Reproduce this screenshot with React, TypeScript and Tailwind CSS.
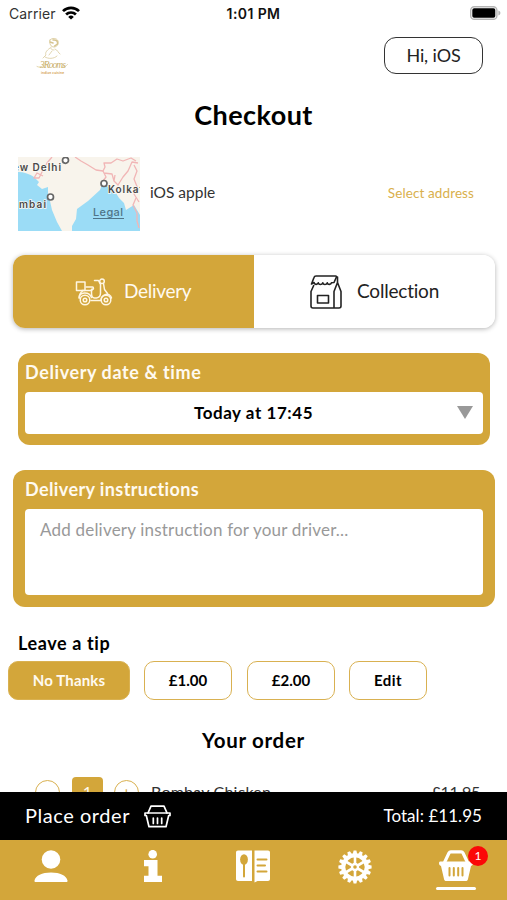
import type { ReactNode } from "react";

function WifiIcon() {
  return (
    <svg className="block h-[14px] w-[18px]" viewBox="0 0 18 14" fill="none" stroke="#000" strokeWidth="2.7">
      <path d="M1 5.1a11.4 11.4 0 0 1 16 0" />
      <path d="M4.1 8.5a7 7 0 0 1 9.8 0" />
      <path d="M9 13.6 6.2 10.9a4 4 0 0 1 5.6 0Z" fill="#000" stroke="none" />
    </svg>
  );
}

function BatteryIcon() {
  return (
    <svg className="block h-[14px] w-[31px]" viewBox="0 0 31 14">
      <rect x="0.7" y="0.7" width="26.2" height="12.6" rx="3.6" fill="#fff" stroke="#b5b5b5" strokeWidth="1.4" />
      <rect x="2.3" y="2.3" width="23" height="9.4" rx="1.8" fill="#000" />
      <path d="M28.4 4.6c1.3.4 2 1.3 2 2.4s-.7 2-2 2.400Z" fill="#b5b5b5" />
    </svg>
  );
}

function StatusBar() {
  return (
    <div className="grid h-[28px] shrink-0 grid-cols-3 items-center pl-[9px] pr-[6px] pb-[2px] font-['Inter',sans-serif] text-[14px]">
      <div className="flex items-center gap-[6px] text-[#333]">
        <span className="pt-[1px] tracking-[0.1px]">Carrier</span>
        <WifiIcon />
      </div>
      <div className="pt-[1px] pr-[3px] text-center text-[14px] font-semibold tracking-[0.4px] text-[#111]">1:01 PM</div>
      <div className="flex justify-end">
        <BatteryIcon />
      </div>
    </div>
  );
}

function Logo() {
  return (
    <svg className="block h-[40px] w-[34px]" viewBox="0 0 34 40" fill="none" stroke="#d6c48f" strokeLinecap="round">
      <path d="M15 3c2-2.500 7-2 8 1 .8 3-1 6-4 6s-5-3-4-7Z" strokeWidth="0.8" />
      <path d="M18 3c3-.5 5 1 4.500 4l-3 2M15 5l3 1" strokeWidth="1.500" />
      <path d="M16 10c-1 2 1 3 3 3M15 11c-4 3-5 5-4 7l-3 3M20 12c3 1 3 4 5 5M10 20c3 2 9 2 12-1M17 14l-3 4" strokeWidth="0.7" />
      <path d="M2 29.500c4 2 6-1 8-3M28 30c2 0 3-1 4.500-2.500" strokeWidth="0.7" />
      <text x="5" y="30.500" className="font-['Liberation_Serif',serif] text-[9.500px] italic" fill="#c9ae66" stroke="none" textLength="26">3Rooms</text>
      <text x="6" y="37" className="font-['Lato',sans-serif] text-[3.500px] font-bold" fill="#d3a050" stroke="none" textLength="23">indian cuisine</text>
    </svg>
  );
}

function MapThumb() {
  return (
    <svg className="block h-[74px] w-[122px]" viewBox="0 0 122 74">
      <rect width="122" height="74" fill="#f8f4ec" />
      <path d="M0 15c6 0 12 2 16 5l5 5-2 3 5 4 6-2v7l2 7 2 9 5 12 5 9H0Z" fill="#9bdcf6" />
      <path d="M54 74v-5l4-7 1-10 11-8 12-11 2-5 11 3 6 10 5 5 2 7 8-5 6 10v16Z" fill="#9bdcf6" />
      <path d="M94 30l8 0 4 9 6 5 6-4 4 8V28H94Z" fill="#f8f4ec" />
      <g fill="none" stroke="#f1b6b6" strokeWidth="1.300" strokeLinejoin="round">
        <path d="M34 0l-5 6-5 9-3 6-5 0 3-5 6 3" />
        <path d="M57 0l6 4 7 4 8 5 7 1 2-4-1-4 7 0 6-4 6 2 8-3 5 3" />
        <path d="M85 14l3 6-3 4M97 18l-1 6 4 4 5-8 5-6 4-9 6 1M116 8l3 6-3 8 4 10-4 5 5 8M86 16l8 1 2 7" />
        <path d="M118 41l-3 7 4 8 0 8 2 7" />
      </g>
      <g fill="#fff" stroke="#666" strokeWidth="1.700">
        <circle cx="47.500" cy="3.300" r="3" />
        <circle cx="86" cy="26.500" r="3" />
        <circle cx="32.500" cy="40" r="3" />
      </g>
      <g className="font-['Inter',sans-serif] text-[10px] font-semibold" fill="#4a4a4a" stroke="#fbf9f4" strokeWidth="1.500" paintOrder="stroke">
        <text x="-5" y="13.500" textLength="48">ew Delhi</text>
        <text x="90" y="36" textLength="35">Kolkat</text>
        <text x="1" y="50.500" textLength="27">mbai</text>
      </g>
      <text x="75" y="59" className="font-['Inter',sans-serif] text-[11px] font-medium" fill="#4f7488" textLength="30">Legal</text>
      <path d="M75 61.500h31" stroke="#4f7488" strokeWidth="1" />
    </svg>
  );
}

function ScooterIcon() {
  return (
    <svg className="block h-[28px] w-[38px]" viewBox="0 0 38 28" fill="none" stroke="#fff6e2" strokeWidth="1.500" strokeLinecap="round" strokeLinejoin="round">
      <path d="M1.500 4h8.500v8.500H1.500Z" />
      <path d="M11 9h6.500c1.300 0 1.300 2.300 0 2.300h-1v4c0 3 1 4.700 3 4.700h2c3-.5 4-2 4-5V6.500l-2-4h-4M7 12.500h10M7.500 13c-2.500 2-3.200 4.500-3 7" />
      <circle cx="27" cy="3.300" r="2.300" />
      <path d="M28.500 5.500l1 6 3 4M4 20c0-6 10-7 12.500-.5M16 22.500h10c0-6 9-9 10.500-2.500" />
      <circle cx="10" cy="22" r="4.800" />
      <circle cx="10" cy="22" r="1.800" />
      <circle cx="31" cy="22" r="4.800" />
      <circle cx="31" cy="22" r="1.800" />
    </svg>
  );
}

function BagIcon() {
  return (
    <svg className="block h-[34px] w-[32px]" viewBox="0 0 32 34" fill="none" stroke="#222" strokeWidth="1.600" strokeLinecap="round" strokeLinejoin="round">
      <path d="M24 7.500 26.300 2.400C26.800 1.400 26.500 1 25.500 1H6C4.800 1 4.300 1.500 4 2.500L1.500 9l2.500-1.500c.5 2.500 3.500 2.500 4.300.3.500 2.300 3.700 2.300 4.500 0 .5 2.300 3.700 2.300 4.500 0 .5 2.300 3.700 2 4.200 0L24 7.500" />
      <path d="M3.700 10.500 1 16.500V31c0 1.300.7 2 2 2h26c1.300 0 2-.7 2-2V16.500L27.500 7.500V2M27.500 7.500l-3.500 9V33" />
      <path d="M7.500 20.500h11v7.500h-11Z" />
    </svg>
  );
}

function BasketOutlineIcon() {
  return (
    <svg className="block h-[23px] w-[27px]" viewBox="0 0 27 23" fill="none" stroke="#fff" strokeWidth="1.700" strokeLinecap="round" strokeLinejoin="round">
      <path d="M4 8 7 1.200h13L23 8" />
      <path d="M1 8h25v2.500h-1.300L22 21.700H5L2.300 10.500H1Z" />
      <path d="M9.300 13v5.500M13.500 13v5.500M17.700 13v5.500" />
    </svg>
  );
}

function UserIcon() {
  return (
    <svg className="block h-[33px] w-[34px]" viewBox="0 0 34 33" fill="#fff">
      <circle cx="17" cy="9.500" r="9.300" />
      <path d="M.5 30.500C1.500 25.500 8 22.500 17 22.500s15.500 3 16.500 8c.2 1-.4 1.500-1.300 1.500H1.800C.9 32 .3 31.500.5 30.500Z" />
    </svg>
  );
}

function InfoIcon() {
  return (
    <svg className="block h-[33px] w-[18px]" viewBox="0 0 18 33" fill="#fff">
      <circle cx="8.700" cy="4.200" r="4.300" />
      <path d="M0 10h13.500v15.700H18V32H0v-6.300h4.500v-9.400H0Z" />
    </svg>
  );
}

function MenuBookIcon() {
  return (
    <svg className="block h-[33px] w-[35px]" viewBox="0 0 35 33">
      <path d="M2 .5h14V31H2c-1.200 0-2-.8-2-2V2.500C0 1.300.8.500 2 .5Z" fill="#fff" />
      <path d="M18.500.5H32c1.200 0 2 .8 2 2V29c0 1.200-.8 2-2 2H21.500l-3 1.500Z" fill="#fff" />
      <ellipse cx="8" cy="9.500" rx="3.900" ry="5.300" fill="#d3a63a" />
      <path d="M8 12v14.500" stroke="#d3a63a" strokeWidth="2" strokeLinecap="round" />
      <path d="M21.500 9.500h9M21.500 15.500h7.500M21.500 21.500h9" stroke="#d3a63a" strokeWidth="2" strokeLinecap="round" />
    </svg>
  );
}

const teeth = Array.from({ length: 16 }, (_, i) => i * 22.5);

function GearIcon() {
  return (
    <svg className="block h-[34px] w-[34px]" viewBox="-17 -17 34 34" fill="none" stroke="#fff">
      {teeth.map((a) => (
        <path key={a} d="M-2.200-13h4.400l-.8-3.600h-2.800Z" fill="#fff" stroke="none" transform={`rotate(${a})`} />
      ))}
      <circle r="11.700" strokeWidth="4" />
      {[0, 60, 120].map((a) => (
        <path key={a} d="M0-11v22" strokeWidth="2.600" transform={`rotate(${a})`} />
      ))}
      <circle r="4.200" fill="#fff" stroke="none" />
      <circle r="1.800" fill="#d3a63a" stroke="none" />
    </svg>
  );
}

function BasketIcon() {
  return (
    <svg className="block h-[32px] w-[34px]" viewBox="0 0 34 32">
      <path d="M5.500 12.500 10 3c.4-.8.900-1.200 1.800-1.200h10.400c.9 0 1.400.4 1.800 1.200l4.500 9.500" fill="none" stroke="#fff" strokeWidth="3.200" />
      <path d="M1.500 11.500h31c1 0 1.500.6 1.500 1.500 0 1.600-.7 2.600-2 3l-3 13c-.3 1.500-1 2-2.300 2H7.300c-1.300 0-2-.5-2.300-2L2 16c-1.300-.4-2-1.400-2-3 0-.9.500-1.500 1.500-1.500Z" fill="#fff" />
      <path d="M10.500 18v7.500M14.800 18v7.500M19.200 18v7.500M23.500 18v7.500" stroke="#d3a63a" strokeWidth="2" strokeLinecap="round" />
    </svg>
  );
}

function TipButton({ label, className }: { label: string; className: string }) {
  return (
    <button className={`flex h-[39px] items-center justify-center rounded-[10px] border-[1.5px] border-[#d9b151] pb-[1px] text-[15px] font-bold ${className}`}>
      {label}
    </button>
  );
}

function NavItem({ children, className }: { children: ReactNode; className: string }) {
  return <button className={`flex justify-center pt-[10px] ${className}`}>{children}</button>;
}

export default function App() {
  return (
    <div className="flex h-[900px] w-[507px] flex-col overflow-hidden bg-white font-['Lato',sans-serif] text-black [font-variant-ligatures:none] [&_button]:whitespace-nowrap">
      <div className="flex h-[792px] shrink-0 flex-col overflow-hidden">
        <StatusBar />
        <header className="flex h-[64px] shrink-0 items-start justify-between pl-[35px] pr-[24px] pt-[9px]">
          <Logo />
          <button className="flex h-[37px] w-[99px] items-center justify-center rounded-[12px] border-[1.5px] border-[#333] text-[18px] tracking-[-0.1px] text-[#222]">Hi, iOS</button>
        </header>
        <h1 className="h-[65px] shrink-0 pt-[5px] text-center text-[27px] leading-[36px] font-bold tracking-[0.45px]">Checkout</h1>

        <div className="flex h-[98px] shrink-0 items-start pl-[18px] pr-[33px]">
          <MapThumb />
          <span className="ml-[10px] pt-[24px] text-[15.5px] leading-[22px] text-[#333]">iOS apple</span>
          <span className="ml-auto pt-[25px] text-[13.5px] leading-[22px] tracking-[0.1px] text-[#d9b04c]">Select address</span>
        </div>

        <div className="ml-[13px] flex h-[73px] w-[482px] shrink-0 overflow-hidden rounded-[12px] shadow-[0_1px_5px_rgba(0,0,0,0.3)]">
          <button className="flex w-[241px] items-center bg-[#d3a63a] pl-[62px] text-[19px] text-[#fffaf0]">
            <ScooterIcon />
            <span className="ml-[11px] tracking-[-0.3px]">Delivery</span>
          </button>
          <button className="flex flex-1 items-center bg-white pl-[56px] text-[19px] text-[#222]">
            <BagIcon />
            <span className="ml-[15px] tracking-[-0.2px]">Collection</span>
          </button>
        </div>

        <section className="mt-[25px] ml-[18px] h-[92px] w-[472px] shrink-0 rounded-[12px] bg-[#d3a63a] px-[7px]">
          <h2 className="h-[39px] text-[18px] leading-[38px] font-bold tracking-[0.6px] text-[#fffaf0]">Delivery date &amp; time</h2>
          <div className="flex h-[42px] items-center rounded-[4px] bg-white pr-[10px] pb-[1px]">
            <span className="flex-1 pl-[25px] text-center text-[17px] font-bold tracking-[0.55px]">Today at 17:45</span>
            <svg className="block h-[13px] w-[16px]" viewBox="0 0 16 13">
              <path d="M0 0h16L8 13Z" fill="#999" />
            </svg>
          </div>
        </section>

        <section className="mt-[25px] ml-[13px] h-[137px] w-[482px] shrink-0 rounded-[12px] bg-[#d3a63a] px-[12px]">
          <h2 className="h-[39px] text-[18px] leading-[38px] font-bold tracking-[0.4px] text-[#fffaf0]">Delivery instructions</h2>
          <div className="h-[86px] rounded-[4px] bg-white pt-[9px] pl-[15px] text-[17px] leading-[24px] tracking-[0.2px] text-[#999]">
            Add delivery instruction for your driver...
          </div>
        </section>

        <h3 className="mt-[24px] h-[30px] shrink-0 pl-[18px] text-[18px] leading-[24px] font-bold tracking-[0.6px]">Leave a tip</h3>
        <div className="flex shrink-0 pl-[8px]">
          <TipButton label="No Thanks" className="w-[122px] bg-[#d3a63a] tracking-[0.15px] text-[#fffaf0]" />
          <TipButton label="£1.00" className="ml-[14px] w-[88px] bg-white" />
          <TipButton label="£2.00" className="ml-[15px] w-[88px] bg-white" />
          <TipButton label="Edit" className="ml-[14px] w-[78px] bg-white tracking-[0.4px]" />
        </div>

        <h2 className="mt-[25px] h-[52px] shrink-0 text-center text-[20.5px] leading-[30px] font-bold tracking-[0.7px]">Your order</h2>
        <div className="flex h-[40px] shrink-0 items-start pl-[35px] pr-[27px] text-[16px] text-[#333]">
          <div className="mt-[3px] flex size-[25px] shrink-0 items-center justify-center rounded-full border-[1.5px] border-[#d9b151] text-[#d3a63a]">-</div>
          <div className="ml-[12px] flex h-[30px] w-[31px] shrink-0 items-center justify-center rounded-[4px] bg-[#d3a63a] pb-[1px] text-[#fffaf0]">1</div>
          <div className="mt-[3px] ml-[11px] flex size-[25px] shrink-0 items-center justify-center rounded-full border-[1.5px] border-[#d9b151] pb-[2px] text-[#d3a63a]">+</div>
          <span className="ml-[12px] pt-[3px] tracking-[0.2px]">Bombay Chicken</span>
          <span className="ml-auto pt-[3px] tracking-[-0.3px]">£11.95</span>
        </div>
      </div>

      <div className="flex h-[48px] shrink-0 items-center bg-black pl-[25px] pr-[25px] text-white">
        <span className="pb-[2px] text-[20px] tracking-[0.55px]">Place order</span>
        <span className="ml-[14px]">
          <BasketOutlineIcon />
        </span>
        <span className="ml-auto pb-[1px] text-[17px] tracking-[0.05px]">Total: £11.95</span>
      </div>

      <nav className="flex h-[60px] shrink-0 items-start bg-[#d3a63a]">
        <NavItem className="w-[102px]"><UserIcon /></NavItem>
        <NavItem className="w-[101px]"><InfoIcon /></NavItem>
        <NavItem className="w-[101px]"><MenuBookIcon /></NavItem>
        <NavItem className="w-[101px]"><GearIcon /></NavItem>
        <NavItem className="w-[102px]">
          <span className="relative flex flex-col items-center">
            <BasketIcon />
            <span className="mt-[5px] h-[3px] w-[40px] rounded-full bg-white" />
            <span className="absolute -top-[4px] left-[32px] flex size-[20px] items-center justify-center rounded-full bg-[#fb0808] text-[12px] text-white">1</span>
          </span>
        </NavItem>
      </nav>
    </div>
  );
}
